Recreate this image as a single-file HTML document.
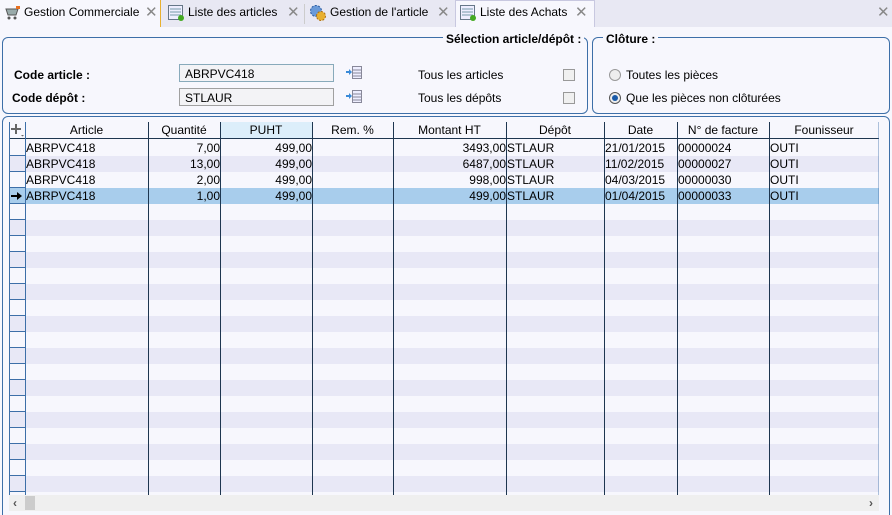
<!DOCTYPE html><html><head><meta charset="utf-8"><style>
*{box-sizing:border-box;margin:0;padding:0}
html{overflow:hidden;width:892px;height:515px}
body{width:892px;height:515px;background:#f7f7fd;font-family:"Liberation Sans",sans-serif;font-size:12px;color:#000;position:relative;overflow:hidden}
.a{position:absolute}
.tabs{left:0;top:0;width:892px;height:27px;background:#e8e8f3}
.tab{top:0;height:27px;padding:5px 0 0 24px;font-size:12px}
.x{color:#888;font-size:15px;top:3px}
.gb{border:1px solid #3d6fa8;border-radius:6px}
.lbl{font-weight:bold}
.inp{background:#f3f3f6;border:1px solid #a0a0a0;height:18px;padding:2px 5px;font-size:12px}
.cb{width:12px;height:12px;border:1px solid #999;background:#f0f0f0}
.row{left:9px;width:870px;height:16px}
.vl{top:122px;width:1px;height:373px;background:#1e3650}
.hd{top:122px;height:16px;text-align:center;font-size:12px;padding-top:1px}
.c{height:16px;font-size:12px;line-height:16px;white-space:nowrap}
.r{text-align:right}
</style></head><body>
<div class="a tabs"></div>
<div class="a" style="left:0;top:0;width:161px;height:27px;background:#f7f7fd;border-right:1px solid #e8b030"></div>
<div class="a" style="left:455px;top:0;width:140px;height:27px;background:#f7f7fd;border:1px solid #c8c8e0;border-bottom:none"></div>
<svg class="a" style="left:5px;top:6px" width="16" height="14"><path d="M1 3h12l-2 6H3z" fill="#9aa" stroke="#555"/><circle cx="4" cy="12" r="1.5" fill="#555"/><circle cx="10" cy="12" r="1.5" fill="#555"/><rect x="11" y="0" width="4" height="3" fill="#e87020"/></svg>
<div class="a tab" style="left:0">Gestion Commerciale</div><div class="a x" style="left:145px">✕</div>
<svg class="a" style="left:168px;top:5px" width="16" height="16"><rect x="0.5" y="0.5" width="14" height="14" fill="#eef" stroke="#678"/><path d="M2 4h11M2 7h11M2 10h11" stroke="#79a"/><circle cx="13" cy="13" r="3" fill="#4a2"/></svg>
<div class="a tab" style="left:164px">Liste des articles</div><div class="a x" style="left:287px">✕</div>
<div class="a" style="left:304px;top:4px;width:1px;height:20px;background:#ccc"></div>
<svg class="a" style="left:309px;top:4px" width="18" height="18"><circle cx="7" cy="7" r="5.5" fill="#6a9ad8" stroke="#2a5aa0" stroke-dasharray="2 1.5"/><circle cx="12" cy="12" r="4.5" fill="#e8b030" stroke="#b07010" stroke-dasharray="2 1.5"/></svg>
<div class="a tab" style="left:306px">Gestion de l'article</div><div class="a x" style="left:437px">✕</div>
<svg class="a" style="left:460px;top:5px" width="16" height="16"><rect x="0.5" y="0.5" width="14" height="14" fill="#eef" stroke="#678"/><path d="M2 4h11M2 7h11M2 10h11" stroke="#79a"/><circle cx="13" cy="13" r="3" fill="#4a2"/></svg>
<div class="a tab" style="left:456px">Liste des Achats</div><div class="a x" style="left:575px">✕</div>
<div class="a x" style="left:877px">✕</div>

<div class="a gb" style="left:2px;top:37px;width:586px;height:77px"></div>
<div class="a lbl" style="left:443px;top:32px;background:#f7f7fd;padding:0 3px">Sélection article/dépôt :</div>
<div class="a lbl" style="left:14px;top:68px">Code article :</div>
<div class="a lbl" style="left:12px;top:91px">Code dépôt :</div>
<div class="a inp" style="left:179px;top:64px;width:155px;border-color:#8ab">ABRPVC418</div>
<div class="a inp" style="left:179px;top:88px;width:155px">STLAUR</div>
<svg class="a" style="left:345px;top:66px" width="18" height="14"><path d="M1 5h3V3l3 3-3 3V7H1z" fill="#3a8ad8"/><rect x="7.5" y="0.5" width="9" height="12" fill="#eef" stroke="#889"/><path d="M8 4h8M8 7h8M8 10h8" stroke="#889"/></svg>
<svg class="a" style="left:345px;top:90px" width="18" height="14"><path d="M1 5h3V3l3 3-3 3V7H1z" fill="#3a8ad8"/><rect x="7.5" y="0.5" width="9" height="12" fill="#eef" stroke="#889"/><path d="M8 4h8M8 7h8M8 10h8" stroke="#889"/></svg>
<div class="a" style="left:418px;top:68px">Tous les articles</div>
<div class="a" style="left:418px;top:91px">Tous les dépôts</div>
<div class="a cb" style="left:563px;top:69px"></div>
<div class="a cb" style="left:563px;top:92px"></div>

<div class="a gb" style="left:592px;top:37px;width:298px;height:77px"></div>
<div class="a lbl" style="left:603px;top:32px;background:#f7f7fd;padding:0 3px">Clôture :</div>
<div class="a" style="left:609px;top:69px;width:12px;height:12px;border-radius:50%;border:1px solid #999;background:#eee"></div>
<div class="a" style="left:609px;top:92px;width:12px;height:12px;border-radius:50%;border:1px solid #555;background:#eee"><div style="margin:2px;width:6px;height:6px;border-radius:50%;background:#1a5aa8"></div></div>
<div class="a" style="left:626px;top:68px">Toutes les pièces</div>
<div class="a" style="left:626px;top:91px">Que les pièces non clôturées</div>

<div class="a gb" style="left:2px;top:116px;width:888px;height:410px"></div>
<div class="a" style="left:9px;top:122px;width:870px;height:17px;border-bottom:1px solid #1e3650;background:#f7f7fd"></div>
<div class="a" style="left:220px;top:122px;width:92px;height:16px;background:#dceefa"></div>
<div id="rows"></div>
<script>
var h='';for(var i=0;i<22;i++){var y=140+i*16;var bg=i==3?'#a8cdec':(i%2?'#e8e8f6':'#f7f7fd');h+='<div class="a row" style="top:'+y+'px;background:'+bg+'"></div><div class="a" style="left:9px;top:'+(y+15)+'px;width:16px;height:1px;background:#3d6fa8"></div>';}
var cols=[9,25,148,220,312,393,506,604,677,769];cols.forEach(function(x,k){h+='<div class="a vl" style="left:'+x+'px;'+(k==0||k==1?'background:#3d6fa8':'')+'"></div>'});
h+='<div class="a vl" style="left:878px;background:#3d6fa8;opacity:.4"></div>';
var d=[['7,00','3493,00','21/01/2015','00000024'],['13,00','6487,00','11/02/2015','00000027'],['2,00','998,00','04/03/2015','00000030'],['1,00','499,00','01/04/2015','00000033']];
d.forEach(function(r,i){var y=140+i*16;h+='<div class="a c" style="left:26px;top:'+y+'px">ABRPVC418</div><div class="a c r" style="left:148px;width:72px;top:'+y+'px">'+r[0]+'</div><div class="a c r" style="left:220px;width:92px;top:'+y+'px">499,00</div><div class="a c r" style="left:393px;width:113px;top:'+y+'px">'+r[1]+'</div><div class="a c" style="left:507px;top:'+y+'px">STLAUR</div><div class="a c" style="left:605px;top:'+y+'px">'+r[2]+'</div><div class="a c" style="left:678px;top:'+y+'px">'+r[3]+'</div><div class="a c" style="left:770px;top:'+y+'px">OUTI</div>';});
document.getElementById('rows').innerHTML=h;
</script>
<div class="a hd" style="left:25px;width:123px">Article</div>
<div class="a hd" style="left:148px;width:72px">Quantité</div>
<div class="a hd" style="left:220px;width:92px">PUHT</div>
<div class="a hd" style="left:312px;width:81px">Rem. %</div>
<div class="a hd" style="left:393px;width:113px">Montant HT</div>
<div class="a hd" style="left:506px;width:98px">Dépôt</div>
<div class="a hd" style="left:604px;width:73px">Date</div>
<div class="a hd" style="left:677px;width:92px">N° de facture</div>
<div class="a hd" style="left:769px;width:110px">Founisseur</div>
<svg class="a" style="left:11px;top:123px" width="14" height="14"><path d="M5 1v10M0 6h10" stroke="#666" stroke-width="2"/><path d="M10 12h3l-1.5 1.5z" fill="#666"/></svg>
<svg class="a" style="left:11px;top:191px" width="12" height="10"><path d="M0 4h6V1l5 4-5 4V6H0z" fill="#000"/></svg>
<div class="a" style="left:9px;top:495px;width:870px;height:16px;background:#efefef"></div>
<div class="a" style="left:25px;top:496px;width:10px;height:14px;background:#ccc"></div>
<div class="a" style="left:13px;top:496px;color:#555;font-size:12px;font-weight:bold">‹</div>
<div class="a" style="left:869px;top:496px;color:#555;font-size:12px;font-weight:bold">›</div>
</body></html>
